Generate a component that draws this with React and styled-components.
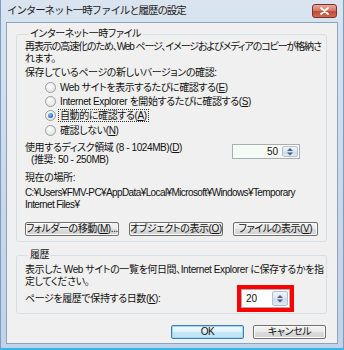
import React from "react";
import styled, { createGlobalStyle } from "styled-components";

const GlobalStyle = createGlobalStyle`
  body {
    margin: 0;
    background: #ffffff;
    font-family: "Liberation Sans", "Noto Sans CJK JP", sans-serif;
    font-size: 10px;
    font-feature-settings: "palt";
    color: #111;
  }
`;

const Window = styled.div`
  width: 344px;
  height: 350px;
  box-sizing: border-box;
  display: flex;
  flex-direction: column;
  padding: 0 5px 4px 5px;
  background: linear-gradient(180deg, #d9e4f0 0%, #c8d8ea 60%, #c0d3e8 100%);
  border-left: 1px solid #7e9cc0;
  border-right: 1px solid #7e9cc0;
  border-bottom: 2px solid #3ab6e6;
`;

const TitleBar = styled.div`
  height: 22px;
  display: flex;
  justify-content: space-between;
  align-items: flex-start;
`;

const Title = styled.div`
  font-family: "Noto Sans CJK JP", sans-serif;
  font-size: 10.5px;
  font-feature-settings: normal;
  letter-spacing: -1.1px;
  line-height: 20px;
  color: #1c1c1c;
  padding-left: 1px;
`;

const CloseButton = styled.div`
  width: 23px;
  height: 12px;
  margin-top: 4px;
  margin-right: 1px;
  border: 1px solid #7a3027;
  border-radius: 3px;
  background: linear-gradient(180deg, #e9a99d 0%, #d47769 45%, #c04a37 55%, #cf6a4f 100%);
  display: flex;
  align-items: center;
  justify-content: center;
`;

const Client = styled.div`
  flex: 1;
  background: #f0f0f0;
  border: 1px solid #8aa3be;
  display: flex;
  flex-direction: column;
  padding: 0 10px 0 9px;
`;

const Group = styled.fieldset`
  margin: ${(p) => p.$top}px 0 0 0;
  padding: ${(p) => p.$padTop}px 8px ${(p) => p.$padBottom}px 8px;
  border: 1px solid #d5dfe5;
  border-radius: 3px;
  min-width: 0;
`;

const Legend = styled.legend`
  padding: 0 2px;
  margin-left: 3px;
  line-height: 12px;
  letter-spacing: -0.4px;
`;

const Line = styled.div`
  line-height: 12px;
  white-space: nowrap;
  letter-spacing: ${(p) => p.$ls ?? -0.4}px;
  margin-top: ${(p) => p.$mt || 0}px;
  padding-left: ${(p) => p.$indent || 0}px;
`;

const U = styled.span`
  text-decoration: underline;
`;

const RadioList = styled.div`
  display: flex;
  flex-direction: column;
  margin: 1px 0 0 20px;
`;

const RadioRow = styled.div`
  height: 14.3px;
  display: flex;
  align-items: center;
  gap: 3px;
  white-space: nowrap;
  letter-spacing: -0.4px;
`;

const RadioCircle = styled.span`
  width: 9px;
  height: 9px;
  border-radius: 50%;
  border: 1px solid #9a9c9e;
  background: radial-gradient(circle at 40% 35%, #ffffff 0%, #e6e6e6 70%, #d2d2d2 100%);
  display: flex;
  align-items: center;
  justify-content: center;
  flex-shrink: 0;

  &::after {
    content: "";
    display: ${(p) => (p.$checked ? "block" : "none")};
    width: 5px;
    height: 5px;
    border-radius: 50%;
    background: radial-gradient(circle at 35% 35%, #8cc4f5 0%, #2d73c4 60%, #1b4f93 100%);
  }
`;

const RadioLabel = styled.span`
  padding: 0 1px;
  outline: ${(p) => (p.$focus ? "1px dotted #333" : "none")};
  line-height: 11px;
`;

const DiskRow = styled.div`
  display: flex;
  justify-content: space-between;
  align-items: flex-start;
  margin-top: 5px;
`;

const SpinBox = styled.div`
  display: flex;
  height: ${(p) => p.$h}px;
  margin-top: ${(p) => p.$mt || 0}px;
  margin-right: ${(p) => p.$mr || 0}px;
  border: 1px solid #abadb3;
  background: #fff;
  outline: ${(p) => (p.$mark ? "4px solid #ff0000" : "none")};
  outline-offset: 0;
`;

const SpinValue = styled.div`
  width: ${(p) => p.$w}px;
  display: flex;
  align-items: center;
  justify-content: ${(p) => (p.$left ? "flex-start" : "flex-end")};
  padding: 0 4px;
  box-sizing: border-box;
  background: ${(p) => (p.$tint ? "#f4fbf4" : "#fff")};
`;

const SpinArrows = styled.div`
  width: 14px;
  margin: 1px 1px 1px 0;
  border: 1px solid #b3c0cf;
  border-radius: 2px;
  background: linear-gradient(180deg, #f1f5fa 0%, #dbe5f0 50%, #cdd9e7 51%, #e2eaf3 100%);
  display: flex;
  align-items: center;
  justify-content: center;
`;

const ButtonRow = styled.div`
  display: flex;
  gap: ${(p) => p.$gap}px;
  margin-top: ${(p) => p.$mt}px;
  justify-content: ${(p) => p.$justify || "flex-start"};
  padding-right: ${(p) => p.$pr || 0}px;
`;

const Button = styled.div`
  width: ${(p) => p.$w}px;
  height: 14px;
  box-sizing: border-box;
  border: 1px solid ${(p) => (p.$default ? "#3c7fb1" : "#707070")};
  border-radius: 2px;
  background: ${(p) =>
    p.$default
      ? "linear-gradient(180deg, #f2f9fd 0%, #e0f1fb 50%, #c5e6f8 51%, #bfe2f6 100%)"
      : "linear-gradient(180deg, #f4f4f4 0%, #e9e9e9 50%, #dcdcdc 51%, #d2d2d2 100%)"};
  box-shadow: inset 0 0 0 1px ${(p) => (p.$default ? "#9fd7f3" : "#fbfbfb")};
  display: flex;
  align-items: center;
  justify-content: center;
  line-height: 12px;
  white-space: nowrap;
  letter-spacing: -0.4px;
`;

const DaysRow = styled.div`
  display: flex;
  justify-content: space-between;
  align-items: center;
  margin-top: 1px;
`;

const Arrows = () => (
  <svg width="8" height="9" viewBox="0 0 8 9">
    <path d="M4 1 L7 4 L1 4 Z" fill="#4d6185" />
    <path d="M1 5.5 L7 5.5 L4 8.5 Z" fill="#4d6185" />
  </svg>
);

const CloseIcon = () => (
  <svg width="9" height="8" viewBox="0 0 9 8">
    <path d="M1 1 L8 7 M8 1 L1 7" stroke="#ffffff" strokeWidth="1.8" strokeLinecap="round" />
  </svg>
);

const Radio = ({ checked, focus, children }) => (
  <RadioRow>
    <RadioCircle $checked={checked} />
    <RadioLabel $focus={focus}>{children}</RadioLabel>
  </RadioRow>
);

export default function App() {
  return (
    <>
      <GlobalStyle />
      <Window>
        <TitleBar>
          <Title>インターネット一時ファイルと履歴の設定</Title>
          <CloseButton>
            <CloseIcon />
          </CloseButton>
        </TitleBar>
        <Client>
          <Group $top={5} $padTop={1} $padBottom={5}>
            <Legend>インターネット一時ファイル</Legend>
            <Line $ls={-1.1}>再表示の高速化のため、Web ページ、イメージおよびメディアのコピーが格納さ</Line>
            <Line>れます。</Line>
            <Line $mt={2}>保存しているページの新しいバージョンの確認:</Line>
            <RadioList>
              <Radio>
                Web サイトを表示するたびに確認する(<U>E</U>)
              </Radio>
              <Radio>
                Internet Explorer を開始するたびに確認する(<U>S</U>)
              </Radio>
              <Radio checked focus>
                自動的に確認する(<U>A</U>)
              </Radio>
              <Radio>
                確認しない(<U>N</U>)
              </Radio>
            </RadioList>
            <DiskRow>
              <div>
                <Line>
                  使用するディスク領域 (8 - 1024MB)(<U>D</U>)
                </Line>
                <Line $indent={6}>(推奨: 50 - 250MB)</Line>
              </div>
              <SpinBox $h={13} $mt={2} $mr={18}>
                <SpinValue $w={49} $tint>
                  50
                </SpinValue>
                <SpinArrows>
                  <Arrows />
                </SpinArrows>
              </SpinBox>
            </DiskRow>
            <Line $mt={6}>現在の場所:</Line>
            <Line $mt={3} $ls={-0.6}>
              C:¥Users¥FMV-PC¥AppData¥Local¥Microsoft¥Windows¥Temporary
            </Line>
            <Line $ls={-0.6}>Internet Files¥</Line>
            <ButtonRow $gap={10} $mt={11}>
              <Button $w={94}>
                フォルダーの移動(<U>M</U>)...
              </Button>
              <Button $w={94}>
                オブジェクトの表示(<U>O</U>)
              </Button>
              <Button $w={89}>
                ファイルの表示(<U>V</U>)
              </Button>
            </ButtonRow>
          </Group>
          <Group $top={7} $padTop={3} $padBottom={5}>
            <Legend>履歴</Legend>
            <Line>表示した Web サイトの一覧を何日間、Internet Explorer に保存するかを指</Line>
            <Line>定してください。</Line>
            <DaysRow>
              <Line>
                ページを履歴で保持する日数(<U>K</U>):
              </Line>
              <SpinBox $h={17} $mr={28} $mark>
                <SpinValue $w={30} $left>
                  20
                </SpinValue>
                <SpinArrows>
                  <Arrows />
                </SpinArrows>
              </SpinBox>
            </DaysRow>
          </Group>
          <ButtonRow $gap={9} $mt={11} $justify="flex-end" $pr={1}>
            <Button $w={73} $default>
              OK
            </Button>
            <Button $w={73}>キャンセル</Button>
          </ButtonRow>
        </Client>
      </Window>
    </>
  );
}
